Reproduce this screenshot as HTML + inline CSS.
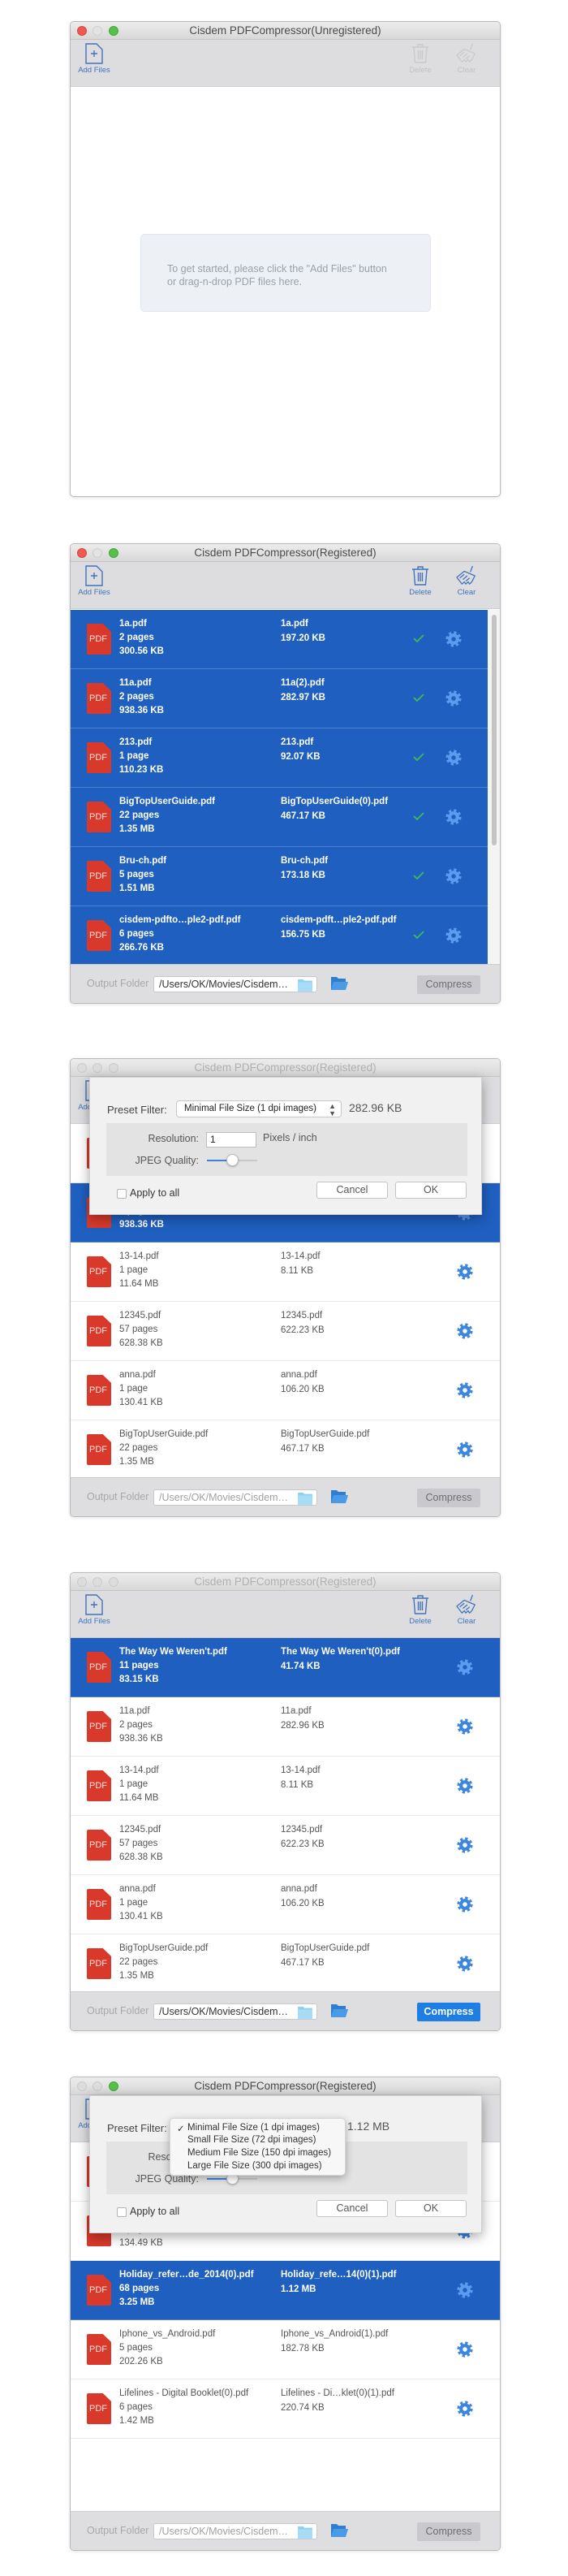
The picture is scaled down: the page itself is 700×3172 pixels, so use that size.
<!DOCTYPE html>
<html><head><meta charset="utf-8">
<style>
*{box-sizing:border-box;margin:0;padding:0}
body{width:700px;height:3172px;background:#fff;position:relative;font-family:"Liberation Sans",Arial,sans-serif;overflow:hidden}
.win{position:absolute;left:86px;width:531px;background:#fff;border:1px solid #b9b9b9;border-radius:5px;overflow:hidden;box-shadow:0 1px 4px rgba(0,0,0,.12)}
.title{position:absolute;left:0;right:0;top:0;height:22px;background:linear-gradient(#ececec,#d8d8d8);border-bottom:1px solid #c4c4c4;text-align:center;font-size:13.5px;line-height:22px;color:#4a4a4a}
.title.in{color:#b0b0b0}
.tl{position:absolute;top:5px;width:12px;height:12px;border-radius:50%}
.r{background:#ee5a52;border:1px solid #d8463f}.y{background:#e3e3e3;border:1px solid #cfcfcf}.g{background:#56c14a;border:1px solid #42a83a}.n{background:#dcdcdc;border:1px solid #cbcbcb}
.tb{position:absolute;left:0;right:0;top:22px;height:58px;background:#dddde0;border-bottom:1px solid #cfcfd2}
.tbi{position:absolute;top:0;text-align:center;font-size:9.5px;color:#3f73ba;width:50px}
.tbi svg{display:block;margin:4px auto 2px}
.tbi.dis{color:#c3c3c6}
.row{position:absolute;left:0;width:531px;height:73px;border-bottom:1px solid #e8e8e8;background:#fff;color:#555;font-size:11.5px}
.row.sel{background:#1f5fbf;border-bottom:1px solid #4d82d2;color:#fff;font-weight:bold}
.pdf{position:absolute;left:20px;top:17px;width:30px;height:38px;background:#d8392b;clip-path:polygon(0 0,66% 0,100% 26%,100% 100%,0 100%);border-radius:2px;color:#fff;font-size:11px;font-weight:normal;line-height:38px;padding-left:3px;color:#ffe4e0}
.t1{position:absolute;left:60px;top:9px;line-height:17px;white-space:nowrap}
.t2{position:absolute;left:259px;top:8px;line-height:18px;white-space:nowrap}
.gear{position:absolute;top:25px;width:22px;height:22px;color:#3d86e0}
.sel .gear{color:#5b9cf0}
.ck{position:absolute;left:422px;top:30px}
.ft{position:absolute;left:0;right:0;bottom:0;height:48px;background:#dedee1;border-top:1px solid #cdcdd0}
.ft .lb{position:absolute;left:20px;top:16px;font-size:12.5px;color:#a8a8a8}
.ft .fld{position:absolute;left:102px;top:14px;width:202px;height:20px;background:#fff;border:1px solid #c8c8c8;border-radius:3px;font-size:12.5px;line-height:18px;padding-left:6px;color:#333}
.ft .fld.dim{color:#a0a0a0}
.f1{position:absolute;right:4px;top:2px}
.f2{position:absolute;left:320px;top:14px}
.cmp{position:absolute;left:427px;top:13px;width:78px;height:23px;background:#c9c9cd;color:#6f6f6f;font-size:12.5px;line-height:23px;text-align:center;border-radius:2px}
.cmp.act{background:#1f7ee3;color:#fff;font-weight:bold}
.dlg{position:absolute;left:23px;top:22px;width:484px;height:170px;background:#f1f1f1;box-shadow:0 4px 14px rgba(0,0,0,.35);border:1px solid #d0d0d0;color:#444}
.dlg .pf{position:absolute;left:21px;top:32px;font-size:13px}
.dlg .pop{position:absolute;left:106px;top:28px;width:204px;height:21px;background:#fff;border:1px solid #c7c7c7;border-radius:4px;font-size:11.5px;line-height:19px;padding-left:9px;color:#222}
.dlg .pop span{position:absolute;right:6px;top:0;font-size:9px;line-height:9px;color:#555;top:2px}
.dlg .val{position:absolute;left:319px;top:29px;font-size:14px;color:#555}
.dlg .pnl{position:absolute;left:20px;top:56px;width:445px;height:65px;background:#e3e3e3}
.dlg .rl{position:absolute;width:134px;text-align:right;font-size:12.5px;color:#555}
.dlg .fd{position:absolute;left:143px;top:67px;width:62px;height:19px;background:#fff;border:1px solid #bdbdbd;font-size:12px;line-height:17px;padding-left:4px;color:#222}
.dlg .px{position:absolute;left:213px;top:67px;font-size:12.5px;color:#555}
.dlg .trk{position:absolute;left:144px;top:101px;width:62px;height:2px;background:#c8c8c8}
.dlg .trk i{position:absolute;left:0;top:0;width:32px;height:2px;background:#3b83de}
.dlg .knob{position:absolute;left:168px;top:94px;width:15px;height:15px;border-radius:50%;background:#fff;border:1px solid #bbb;box-shadow:0 1px 2px rgba(0,0,0,.25)}
.dlg .cb{position:absolute;left:33px;top:137px;width:12px;height:12px;background:#fff;border:1px solid #b5b5b5;border-radius:2px}
.dlg .ap{position:absolute;left:49px;top:135px;font-size:12.5px;color:#333}
.dlg .bt{position:absolute;top:128px;width:88px;height:21px;background:#fff;border:1px solid #c4c4c4;border-radius:3px;text-align:center;font-size:12.5px;line-height:19px;color:#555}
.menu{position:absolute;left:98px;top:27px;width:217px;height:71px;background:#f7f7f7;border-radius:5px;box-shadow:0 3px 10px rgba(0,0,0,.3);border:1px solid #d5d5d5;font-size:11.5px;color:#333}
.menu div{position:absolute;left:21px;white-space:nowrap}
</style></head><body>
<svg width="0" height="0" style="position:absolute">
<defs>
<symbol id="gear" viewBox="-12 -12 24 24"><circle r="8.2" fill="none" stroke="currentColor" stroke-width="4.5" stroke-dasharray="3.3 3.14"/><path fill="currentColor" fill-rule="evenodd" d="M0,-7.5a7.5,7.5 0 1,0 0.01,0z M0,-3a3,3 0 1,1 -0.01,0z"/></symbol>
<symbol id="add" viewBox="0 0 22 26"><path d="M1 1h13l7 7v17H1z" fill="none" stroke="currentColor" stroke-width="1.4"/><path d="M11 9v8M7 13h8" stroke="currentColor" stroke-width="1.4"/></symbol>
<symbol id="trash" viewBox="0 0 24 26"><path d="M2 5h20M9 5V2h6v3M4 5l1.5 19h13L20 5M9.5 9v11M12 9v11M14.5 9v11" fill="none" stroke="currentColor" stroke-width="1.4"/></symbol>
<symbol id="broom" viewBox="0 0 30 28"><path d="M23 1l-3 8M12 8l14 6-4 8-3 3-2-3-3 3-2-3-3 3L2 16z M6 17l6-5M10 19l6-5M14 21l5-4" fill="none" stroke="currentColor" stroke-width="1.4" stroke-linejoin="round"/></symbol>
<symbol id="ck" viewBox="0 0 14 10"><path d="M1 5l4 4 8-8" fill="none" stroke="#3dbb5a" stroke-width="1.8"/></symbol>
<symbol id="fold1" viewBox="0 0 20 18"><path d="M0 1h7l2 2h11v15H0z" fill="#8fd0f2"/><path d="M0 5h20v13H0z" fill="#a7dcf6"/></symbol>
<symbol id="fold2" viewBox="0 0 22 18"><path d="M1 1h7l2 2h9v14H1z" fill="#2f7fd0"/><path d="M4 7h18l-3 10H1z" fill="#4a9ae6"/></symbol>
</defs></svg>

<!-- WINDOW 1 -->
<div class="win" style="top:26px;height:586px">
 <div class="title">Cisdem PDFCompressor(Unregistered)<span class="tl r" style="left:8px"></span><span class="tl y" style="left:27px"></span><span class="tl g" style="left:47px"></span></div>
 <div class="tb">
  <div class="tbi" style="left:4px"><svg width="22" height="26" style="color:#3f73ba"><use href="#add"/></svg>Add Files</div>
  <div class="tbi dis" style="left:406px"><svg width="24" height="26" style="color:#cacacd"><use href="#trash"/></svg>Delete</div>
  <div class="tbi dis" style="left:463px"><svg width="30" height="26" style="color:#cacacd"><use href="#broom"/></svg>Clear</div>
 </div>
 <div style="position:absolute;left:86px;top:261px;width:358px;height:96px;background:#edf1f6;border-radius:5px;border:1px solid #e2e7ee;font-size:12.5px;color:#9aa0a8;line-height:16px;padding:34px 0 0 32px">To get started, please click the "Add Files" button<br>or drag-n-drop PDF files here.</div>
</div>

<!-- WINDOW 2 -->
<div class="win" style="top:669px;height:567px">
 <div class="title">Cisdem PDFCompressor(Registered)<span class="tl r" style="left:8px"></span><span class="tl y" style="left:27px"></span><span class="tl g" style="left:47px"></span></div>
 <div class="tb">
  <div class="tbi" style="left:4px"><svg width="22" height="26"><use href="#add"/></svg>Add Files</div>
  <div class="tbi" style="left:406px"><svg width="24" height="26"><use href="#trash"/></svg>Delete</div>
  <div class="tbi" style="left:463px"><svg width="30" height="26"><use href="#broom"/></svg>Clear</div>
 </div>
 <div style="position:absolute;left:514px;top:81px;width:17px;height:438px;background:#f4f4f4"><div style="position:absolute;left:5px;top:6px;width:6px;height:284px;border-radius:3px;background:#c4c4c4"></div></div>
 <div class="row sel" style="top:81px;width:514px"><div class="pdf">PDF</div><div class="t1">1a.pdf<br>2 pages<br>300.56 KB</div><div class="t2">1a.pdf<br>197.20 KB</div><svg class="ck" width="14" height="10"><use href="#ck"/></svg><svg class="gear" style="left:461px"><use href="#gear"/></svg></div>
 <div class="row sel" style="top:154px;width:514px"><div class="pdf">PDF</div><div class="t1">11a.pdf<br>2 pages<br>938.36 KB</div><div class="t2">11a(2).pdf<br>282.97 KB</div><svg class="ck" width="14" height="10"><use href="#ck"/></svg><svg class="gear" style="left:461px"><use href="#gear"/></svg></div>
 <div class="row sel" style="top:227px;width:514px"><div class="pdf">PDF</div><div class="t1">213.pdf<br>1 page<br>110.23 KB</div><div class="t2">213.pdf<br>92.07 KB</div><svg class="ck" width="14" height="10"><use href="#ck"/></svg><svg class="gear" style="left:461px"><use href="#gear"/></svg></div>
 <div class="row sel" style="top:300px;width:514px"><div class="pdf">PDF</div><div class="t1">BigTopUserGuide.pdf<br>22 pages<br>1.35 MB</div><div class="t2">BigTopUserGuide(0).pdf<br>467.17 KB</div><svg class="ck" width="14" height="10"><use href="#ck"/></svg><svg class="gear" style="left:461px"><use href="#gear"/></svg></div>
 <div class="row sel" style="top:373px;width:514px"><div class="pdf">PDF</div><div class="t1">Bru-ch.pdf<br>5 pages<br>1.51 MB</div><div class="t2">Bru-ch.pdf<br>173.18 KB</div><svg class="ck" width="14" height="10"><use href="#ck"/></svg><svg class="gear" style="left:461px"><use href="#gear"/></svg></div>
 <div class="row sel" style="top:446px;width:514px"><div class="pdf">PDF</div><div class="t1">cisdem-pdfto…ple2-pdf.pdf<br>6 pages<br>266.76 KB</div><div class="t2">cisdem-pdft…ple2-pdf.pdf<br>156.75 KB</div><svg class="ck" width="14" height="10"><use href="#ck"/></svg><svg class="gear" style="left:461px"><use href="#gear"/></svg></div>
 <div class="ft"><div class="lb">Output Folder</div><div class="fld">/Users/OK/Movies/Cisdem…<svg class="f1" width="20" height="16"><use href="#fold1"/></svg></div><svg class="f2" width="22" height="18"><use href="#fold2"/></svg><div class="cmp">Compress</div></div>
</div>

<!-- WINDOW 3 -->
<div class="win" style="top:1303px;height:565px">
 <div class="title in">Cisdem PDFCompressor(Registered)<span class="tl n" style="left:8px"></span><span class="tl n" style="left:27px"></span><span class="tl n" style="left:47px"></span></div>
 <div class="tb">
  <div class="tbi" style="left:4px"><svg width="22" height="26"><use href="#add"/></svg>Add Files</div>
 </div>
 <div class="row" style="top:80px"><div class="pdf">PDF</div><div class="t1">1a.pdf<br>2 pages<br>300.56 KB</div><div class="t2">1a.pdf<br>197.20 KB</div><svg class="gear" style="left:475px"><use href="#gear"/></svg></div>
 <div class="row sel" style="top:153px"><div class="pdf">PDF</div><div class="t1">11a.pdf<br>2 pages<br>938.36 KB</div><div class="t2">11a.pdf<br>282.96 KB</div><svg class="gear" style="left:475px"><use href="#gear"/></svg></div>
 <div class="row" style="top:226px"><div class="pdf">PDF</div><div class="t1">13-14.pdf<br>1 page<br>11.64 MB</div><div class="t2">13-14.pdf<br>8.11 KB</div><svg class="gear" style="left:475px"><use href="#gear"/></svg></div>
 <div class="row" style="top:299px"><div class="pdf">PDF</div><div class="t1">12345.pdf<br>57 pages<br>628.38 KB</div><div class="t2">12345.pdf<br>622.23 KB</div><svg class="gear" style="left:475px"><use href="#gear"/></svg></div>
 <div class="row" style="top:372px"><div class="pdf">PDF</div><div class="t1">anna.pdf<br>1 page<br>130.41 KB</div><div class="t2">anna.pdf<br>106.20 KB</div><svg class="gear" style="left:475px"><use href="#gear"/></svg></div>
 <div class="row" style="top:445px"><div class="pdf">PDF</div><div class="t1">BigTopUserGuide.pdf<br>22 pages<br>1.35 MB</div><div class="t2">BigTopUserGuide.pdf<br>467.17 KB</div><svg class="gear" style="left:475px"><use href="#gear"/></svg></div>
 <div class="ft"><div class="lb">Output Folder</div><div class="fld dim">/Users/OK/Movies/Cisdem…<svg class="f1" width="20" height="16"><use href="#fold1"/></svg></div><svg class="f2" width="22" height="18"><use href="#fold2"/></svg><div class="cmp">Compress</div></div>
 <div class="dlg">
  <div class="pf">Preset Filter:</div>
  <div class="pop">Minimal File Size (1 dpi images)<span>▲<br>▼</span></div>
  <div class="val">282.96 KB</div>
  <div class="pnl"></div>
  <div class="rl" style="top:68px">Resolution:</div>
  <div class="fd">1</div><div class="px">Pixels / inch</div>
  <div class="rl" style="top:95px">JPEG Quality:</div>
  <div class="trk"><i></i></div><div class="knob"></div>
  <div class="cb"></div><div class="ap">Apply to all</div>
  <div class="bt" style="left:279px">Cancel</div><div class="bt" style="left:376px">OK</div>
 </div>
</div>

<!-- WINDOW 4 -->
<div class="win" style="top:1936px;height:565px">
 <div class="title in">Cisdem PDFCompressor(Registered)<span class="tl n" style="left:8px"></span><span class="tl n" style="left:27px"></span><span class="tl n" style="left:47px"></span></div>
 <div class="tb">
  <div class="tbi" style="left:4px"><svg width="22" height="26"><use href="#add"/></svg>Add Files</div>
  <div class="tbi" style="left:406px"><svg width="24" height="26"><use href="#trash"/></svg>Delete</div>
  <div class="tbi" style="left:463px"><svg width="30" height="26"><use href="#broom"/></svg>Clear</div>
 </div>
 <div class="row sel" style="top:80px"><div class="pdf">PDF</div><div class="t1">The Way We Weren't.pdf<br>11 pages<br>83.15 KB</div><div class="t2">The Way We Weren't(0).pdf<br>41.74 KB</div><svg class="gear" style="left:475px"><use href="#gear"/></svg></div>
 <div class="row" style="top:153px"><div class="pdf">PDF</div><div class="t1">11a.pdf<br>2 pages<br>938.36 KB</div><div class="t2">11a.pdf<br>282.96 KB</div><svg class="gear" style="left:475px"><use href="#gear"/></svg></div>
 <div class="row" style="top:226px"><div class="pdf">PDF</div><div class="t1">13-14.pdf<br>1 page<br>11.64 MB</div><div class="t2">13-14.pdf<br>8.11 KB</div><svg class="gear" style="left:475px"><use href="#gear"/></svg></div>
 <div class="row" style="top:299px"><div class="pdf">PDF</div><div class="t1">12345.pdf<br>57 pages<br>628.38 KB</div><div class="t2">12345.pdf<br>622.23 KB</div><svg class="gear" style="left:475px"><use href="#gear"/></svg></div>
 <div class="row" style="top:372px"><div class="pdf">PDF</div><div class="t1">anna.pdf<br>1 page<br>130.41 KB</div><div class="t2">anna.pdf<br>106.20 KB</div><svg class="gear" style="left:475px"><use href="#gear"/></svg></div>
 <div class="row" style="top:445px"><div class="pdf">PDF</div><div class="t1">BigTopUserGuide.pdf<br>22 pages<br>1.35 MB</div><div class="t2">BigTopUserGuide.pdf<br>467.17 KB</div><svg class="gear" style="left:475px"><use href="#gear"/></svg></div>
 <div class="ft"><div class="lb">Output Folder</div><div class="fld">/Users/OK/Movies/Cisdem…<svg class="f1" width="20" height="16"><use href="#fold1"/></svg></div><svg class="f2" width="22" height="18"><use href="#fold2"/></svg><div class="cmp act">Compress</div></div>
</div>

<!-- WINDOW 5 -->
<div class="win" style="top:2557px;height:584px">
 <div class="title">Cisdem PDFCompressor(Registered)<span class="tl n" style="left:8px"></span><span class="tl n" style="left:27px"></span><span class="tl g" style="left:47px"></span></div>
 <div class="tb">
  <div class="tbi" style="left:4px"><svg width="22" height="26"><use href="#add"/></svg>Add Files</div>
 </div>
 <div class="row" style="top:80px"><div class="pdf">PDF</div><div class="t1">1a.pdf<br>2 pages<br>300.56 KB</div><div class="t2">1a.pdf<br>197.20 KB</div><svg class="gear" style="left:475px"><use href="#gear"/></svg></div>
 <div class="row" style="top:153px"><div class="pdf">PDF</div><div class="t1">Notes.pdf<br>1 page<br>134.49 KB</div><div class="t2">Notes.pdf<br>100.38 KB</div><svg class="gear" style="left:475px"><use href="#gear"/></svg></div>
 <div class="row sel" style="top:226px"><div class="pdf">PDF</div><div class="t1">Holiday_refer…de_2014(0).pdf<br>68 pages<br>3.25 MB</div><div class="t2">Holiday_refe…14(0)(1).pdf<br>1.12 MB</div><svg class="gear" style="left:475px"><use href="#gear"/></svg></div>
 <div class="row" style="top:299px"><div class="pdf">PDF</div><div class="t1">Iphone_vs_Android.pdf<br>5 pages<br>202.26 KB</div><div class="t2">Iphone_vs_Android(1).pdf<br>182.78 KB</div><svg class="gear" style="left:475px"><use href="#gear"/></svg></div>
 <div class="row" style="top:372px"><div class="pdf">PDF</div><div class="t1">Lifelines - Digital Booklet(0).pdf<br>6 pages<br>1.42 MB</div><div class="t2">Lifelines - Di…klet(0)(1).pdf<br>220.74 KB</div><svg class="gear" style="left:475px"><use href="#gear"/></svg></div>
 <div class="ft"><div class="lb">Output Folder</div><div class="fld dim">/Users/OK/Movies/Cisdem…<svg class="f1" width="20" height="16"><use href="#fold1"/></svg></div><svg class="f2" width="22" height="18"><use href="#fold2"/></svg><div class="cmp">Compress</div></div>
 <div class="dlg">
  <div class="pf">Preset Filter:</div>
  <div class="val" style="left:317px">1.12 MB</div>
  <div class="pnl"></div>
  <div class="rl" style="top:68px">Resolution:</div>
  <div class="fd">1</div><div class="px">Pixels / inch</div>
  <div class="rl" style="top:95px">JPEG Quality:</div>
  <div class="trk"><i></i></div><div class="knob"></div>
  <div class="cb"></div><div class="ap">Apply to all</div>
  <div class="bt" style="left:279px">Cancel</div><div class="bt" style="left:376px">OK</div>
  <div class="menu">
   <div style="left:8px;top:5px">✓</div>
   <div style="top:5px">Minimal File Size (1 dpi images)</div>
   <div style="top:20px">Small File Size (72 dpi images)</div>
   <div style="top:36px">Medium File Size (150 dpi images)</div>
   <div style="top:52px">Large File Size (300 dpi images)</div>
  </div>
 </div>
</div>
</body></html>
